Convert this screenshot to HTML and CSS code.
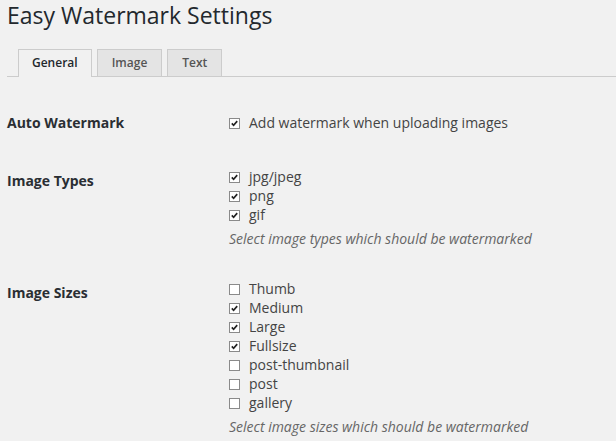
FILE: index.html
```html
<!DOCTYPE html>
<html lang="en">
<head>
    <meta charset="UTF-8">
    <meta name="viewport" content="width=device-width, initial-scale=1.0">
    <title>Easy Watermark Settings</title>
    <link rel="stylesheet" href="styles.css">
</head>
<body>
    <div class="wrap">
        <h1>Easy Watermark Settings</h1>

        <!-- Tabs -->
        <nav class="tabs">
            <a class="tab active">General</a>
            <a class="tab">Image</a>
            <a class="tab">Text</a>
        </nav>

        <!-- Settings -->
        <div class="settings">
            <div class="row row-single">
                <div class="row-label flush">Auto Watermark</div>
                <div class="row-field">
                    <label class="option"><span class="check"><svg viewBox="0 0 11 11"><path d="M2.2 5.4 L4.4 7.8 L8.8 2.6" /></svg></span>Add watermark when uploading images</label>
                </div>
            </div>

            <div class="row">
                <div class="row-label">Image Types</div>
                <div class="row-field">
                    <label class="option"><span class="check"><svg viewBox="0 0 11 11"><path d="M2.2 5.4 L4.4 7.8 L8.8 2.6" /></svg></span>jpg/jpeg</label>
                    <label class="option"><span class="check"><svg viewBox="0 0 11 11"><path d="M2.2 5.4 L4.4 7.8 L8.8 2.6" /></svg></span>png</label>
                    <label class="option"><span class="check"><svg viewBox="0 0 11 11"><path d="M2.2 5.4 L4.4 7.8 L8.8 2.6" /></svg></span>gif</label>
                    <p class="description">Select image types which should be watermarked</p>
                </div>
            </div>

            <div class="row">
                <div class="row-label">Image Sizes</div>
                <div class="row-field">
                    <label class="option"><span class="check"></span>Thumb</label>
                    <label class="option"><span class="check"><svg viewBox="0 0 11 11"><path d="M2.2 5.4 L4.4 7.8 L8.8 2.6" /></svg></span>Medium</label>
                    <label class="option"><span class="check"><svg viewBox="0 0 11 11"><path d="M2.2 5.4 L4.4 7.8 L8.8 2.6" /></svg></span>Large</label>
                    <label class="option"><span class="check"><svg viewBox="0 0 11 11"><path d="M2.2 5.4 L4.4 7.8 L8.8 2.6" /></svg></span>Fullsize</label>
                    <label class="option"><span class="check"></span>post-thumbnail</label>
                    <label class="option"><span class="check"></span>post</label>
                    <label class="option"><span class="check"></span>gallery</label>
                    <p class="description">Select image sizes which should be watermarked</p>
                </div>
            </div>
        </div>
    </div>
</body>
</html>
```

FILE: styles.css
```css
body {
    font-family: "Open Sans", "Noto Sans", sans-serif;
    margin: 0;
    padding: 0;
    background-color: #f1f1f1;
    color: #444;
}

.wrap {
    padding: 1px 0 0 7px;
}

h1 {
    margin: 0;
    font-size: 23px;
    font-weight: 400;
    line-height: 29px;
    color: #23282d;
}

/* Tabs */
.tabs {
    display: flex;
    gap: 5px;
    margin-top: 19px;
    padding-left: 11px;
    border-bottom: 1px solid #ccc;
}

.tab {
    display: block;
    padding: 0 14px;
    font-size: 12px;
    font-weight: 600;
    line-height: 26px;
    color: #555;
    background-color: #e4e4e4;
    border: 1px solid #ccc;
    border-bottom: none;
    cursor: pointer;
}

.tab.active {
    color: #23282d;
    background-color: #f1f1f1;
    margin-bottom: -1px;
    padding: 0 13px 1px;
}

/* Settings rows */
.settings {
    margin-top: 21px;
}

.row {
    display: grid;
    grid-template-columns: 222px 1fr;
    padding: 15px 0 16px;
}

.row-single {
    padding-bottom: 20px;
}

.row-label {
    padding-top: 4px;
    font-size: 14px;
    font-weight: 700;
    line-height: 19px;
    color: #2a2e33;
}

.row-label.flush {
    padding-top: 0;
}

.option {
    display: flex;
    align-items: center;
    gap: 9px;
    font-size: 14px;
    line-height: 19px;
    color: #444;
}

.check {
    display: block;
    width: 9px;
    height: 9px;
    margin-top: 1px;
    border: 1px solid #8a8a8a;
    background-color: #fff;
    flex-shrink: 0;
}

.check svg {
    display: block;
    width: 9px;
    height: 9px;
}

.check path {
    fill: none;
    stroke: #222;
    stroke-width: 2;
}

.description {
    margin: 5px 0 0;
    font-size: 14px;
    font-style: italic;
    line-height: 19px;
    color: #666;
}
```
